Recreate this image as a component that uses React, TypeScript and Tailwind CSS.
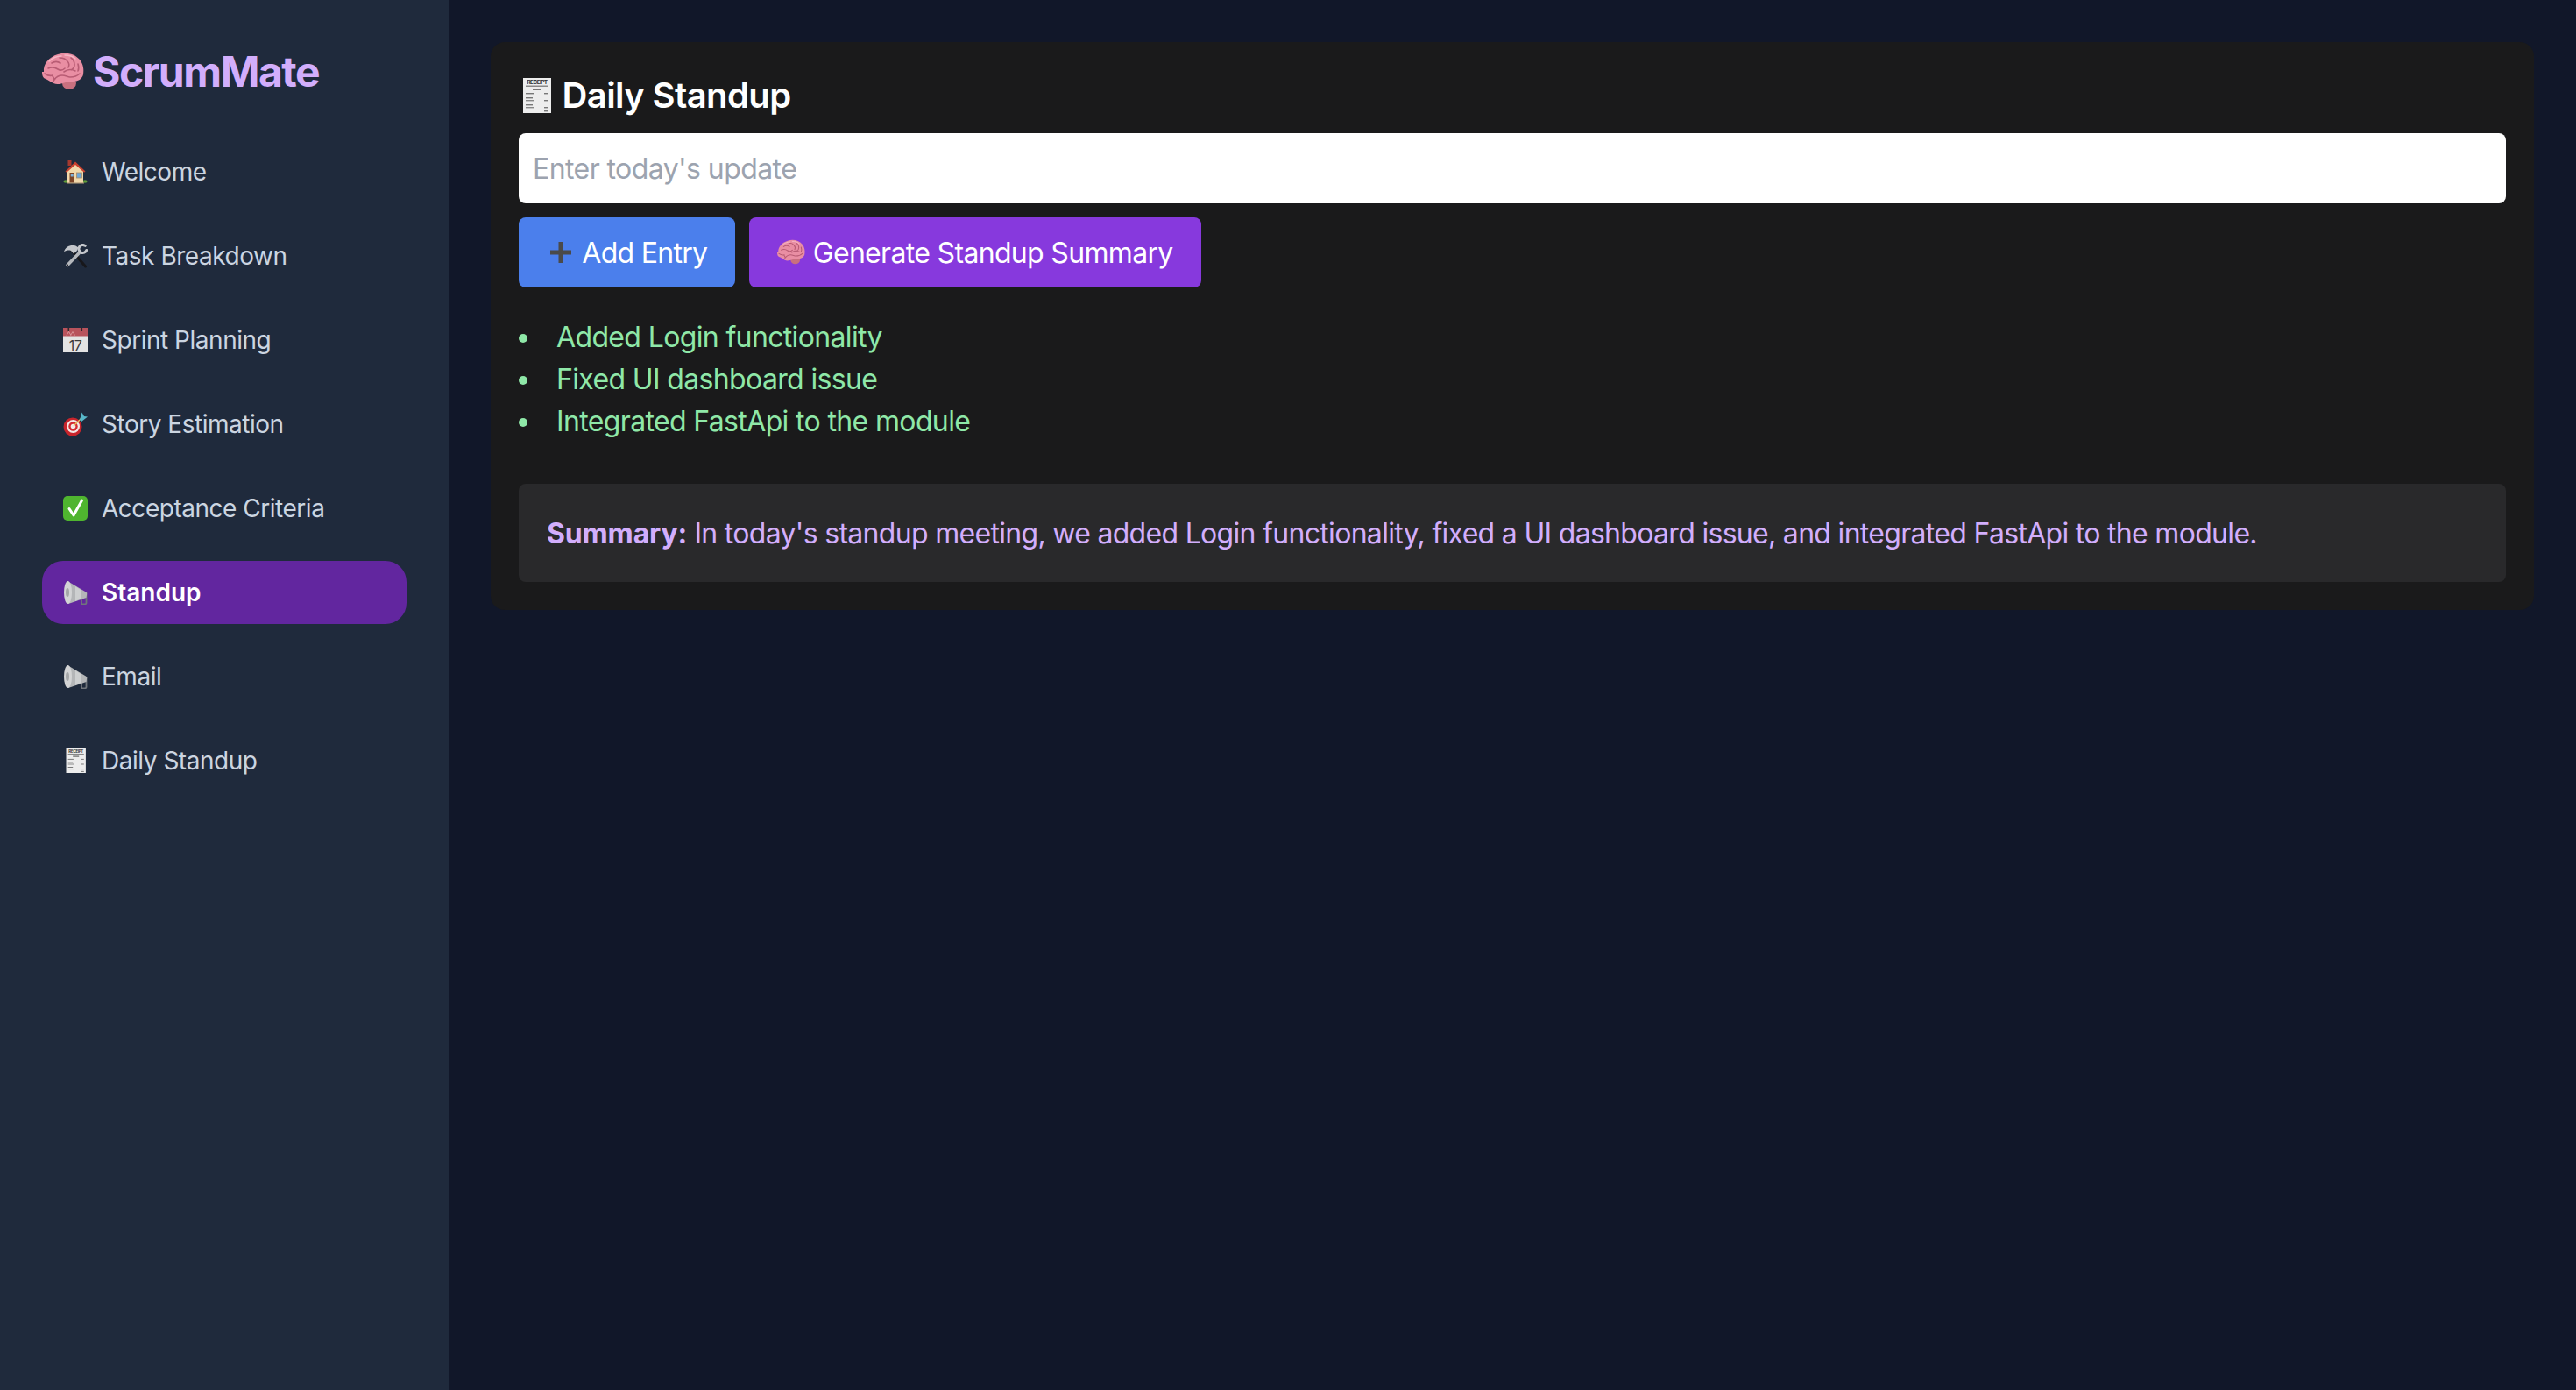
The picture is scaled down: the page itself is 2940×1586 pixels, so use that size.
import React from "react";

const cls = "inline-block size-[1em] shrink-0 align-[-0.14em]";

function Brain() {
  return (
    <svg viewBox="0 0 48 48" className={cls}>
      <ellipse cx="31" cy="37" rx="8" ry="7" fill="#c9707f" />
      <path d="M2 24C1 15 8 7 18 4c9-3 19-1 25 6 4 5 5 11 4 17-1 5-6 8-12 8-3 0-5 0-8 1-6 2-10 3-14 1-4-2-6-4-9-5-3-1-4-4-4-8Z" fill="#e98ea3" />
      <path d="M3 26c3 2 6 3 9 2M11 14c3-2 7-2 10 0M7 20c4-2 8-1 11 1 3 2 6 1 8-1M20 8c3 0 7 1 9 4 2 2 2 5 1 7M33 8c3 2 4 5 4 8s-2 5-4 6M14 33c2-3 5-5 9-5 4 0 6 2 9 2 4 0 8-1 11-4M25 24c4-3 9-3 13-1M12 29c2 2 2 4 1 6M41 15c1 3 1 6 0 8" fill="none" stroke="#b85c74" strokeWidth="1.6" strokeLinecap="round" />
      <path d="M8 12c4-4 9-6 14-6M26 5c5 0 9 1 12 4" fill="none" stroke="#f6b8c6" strokeWidth="1.4" strokeLinecap="round" />
    </svg>
  );
}

function House() {
  return (
    <svg viewBox="0 0 28 28" className={cls}>
      <rect x="5.5" y="1" width="4" height="6" fill="#a5392f" />
      <ellipse cx="3" cy="25" rx="2.6" ry="1.8" fill="#5f9a3a" />
      <ellipse cx="25" cy="25" rx="2.6" ry="1.8" fill="#5f9a3a" />
      <path d="M5 12 14 5l9 7v15H5Z" fill="#f1d8ab" />
      <path d="M2.5 13.5 14 2.5l11.5 11-1.5 1.2L14 6 4 14.7Z" fill="#c8412f" />
      <rect x="7.5" y="15" width="5.5" height="12" fill="#7d4426" />
      <rect x="8.7" y="16.5" width="3" height="3" fill="#7fb2dc" />
      <rect x="15.5" y="15" width="6" height="6" fill="#6fa7d8" stroke="#a98a68" strokeWidth="0.8" />
      <rect x="4" y="26.3" width="20" height="1.2" fill="#b9a27e" />
    </svg>
  );
}

function Tools() {
  return (
    <svg viewBox="0 0 28 28" className={cls}>
      <path d="M10 8 25.500 26" stroke="#17171b" strokeWidth="3" strokeLinecap="round" />
      <path d="M1 9.500C2.500 3.500 8 1 14.500 2.500l3 2-2 4-3.500 3-3-3.500C6.500 7 3.500 7.500 1 9.500Z" fill="#c4c7cc" />
      <path d="M19.500 9.500 5 24.500" stroke="#b4b7bc" strokeWidth="3.600" strokeLinecap="round" />
      <path d="M25.200 2.400A4.500 4.500 0 1 0 26.700 7.500" fill="none" stroke="#c4c7cc" strokeWidth="3" strokeLinecap="round" />
      <circle cx="5" cy="24.500" r="1.100" fill="#24242a" />
    </svg>
  );
}

function Calendar() {
  return (
    <svg viewBox="0 0 28 28" className={cls}>
      <rect x="0" y="0" width="28" height="28" fill="#e3e3e3" />
      <rect x="0" y="0" width="28" height="9.500" fill="#b8535c" />
      <rect x="5.500" y="0" width="1.600" height="4" fill="#33292b" />
      <rect x="20.500" y="0" width="1.600" height="4" fill="#33292b" />
      <path d="M4 8.500 6.500 4.500 9 8.500M8.500 8.500 11 4.500l2.500 4" fill="none" stroke="#dc9da2" strokeWidth="0.9" />
      <text x="14" y="25.500" textAnchor="middle" fontSize="16" fontFamily="Inter, sans-serif" fill="#3a3a3c">17</text>
    </svg>
  );
}

function Target() {
  return (
    <svg viewBox="0 0 28 28" className={cls}>
      <circle cx="11" cy="17" r="10.500" fill="#c8252c" />
      <circle cx="11.500" cy="16.500" r="7.500" fill="#f4e9e6" />
      <circle cx="11.500" cy="16.500" r="5.200" fill="#d42b31" />
      <circle cx="11.500" cy="16.500" r="2.800" fill="#f4e9e6" />
      <path d="M12 16 21 7" stroke="#e6c35c" strokeWidth="1.300" />
      <path d="M19 9 21.500 0.500 24 5l4 .5-7 5.500Z" fill="#57b7c9" />
    </svg>
  );
}

function Check() {
  return (
    <svg viewBox="0 0 28 28" className={cls}>
      <rect x="0" y="0" width="28" height="28" rx="5" fill="#4fb52f" />
      <path d="M7 14.500 12 22 21.500 5" fill="none" stroke="#fff" strokeWidth="3" strokeLinecap="round" strokeLinejoin="round" />
    </svg>
  );
}

function Megaphone() {
  return (
    <svg viewBox="0 0 28 28" className={cls}>
      <path d="M21 15h5.500v11c0 1-1 1.500-3 1.500h-1c-1 0-1.500-.5-1.500-1.500Z" fill="none" stroke="#70757c" strokeWidth="1.800" />
      <path d="M5 1 26 13.500c1 .6 1.500 1.800 1 3.500l-.5 3L6 27Z" fill="#b4b6b8" />
      <path d="M14 7 20 11v10l-6 3Z" fill="#cdcfd0" />
      <ellipse cx="5.500" cy="14" rx="4.500" ry="13" fill="#d3d4d5" />
      <ellipse cx="5" cy="14" rx="2" ry="5" fill="#a4a6a8" />
    </svg>
  );
}

function Receipt() {
  return (
    <svg viewBox="0 0 40 40" className={cls}>
      <rect x="5" y="0" width="32" height="40" fill="#ededed" />
      <text x="21" y="6.500" textAnchor="middle" fontSize="6.500" fontWeight="700" fontFamily="Inter, sans-serif" fill="#333">RECEIPT</text>
      <rect x="8" y="8.500" width="26" height="1.500" fill="#888" />
      <rect x="16" y="12" width="10" height="2" fill="#777" />
      <rect x="8" y="17" width="9" height="1.400" fill="#777" />
      <rect x="29" y="17" width="5" height="1.400" fill="#777" />
      <rect x="8" y="22" width="8" height="1.400" fill="#777" />
      <rect x="8" y="25" width="10" height="1.400" fill="#888" />
      <rect x="29" y="25" width="5" height="1.400" fill="#777" />
      <rect x="8" y="30" width="8" height="1.400" fill="#777" />
      <rect x="8" y="33" width="10" height="1.400" fill="#888" />
      <rect x="29" y="33" width="5" height="1.400" fill="#777" />
      <rect x="29" y="37" width="5" height="1.400" fill="#777" />
    </svg>
  );
}

function Plus() {
  return (
    <svg viewBox="0 0 32 32" className={cls}>
      <path d="M13.500 4h5v9.500H28v5h-9.500V28h-5v-9.500H4v-5h9.500Z" fill="#4a4a4a" />
    </svg>
  );
}

const nav: { icon: React.ReactNode; label: string; active?: boolean }[] = [
  { icon: <House />, label: "Welcome" },
  { icon: <Tools />, label: "Task Breakdown" },
  { icon: <Calendar />, label: "Sprint Planning" },
  { icon: <Target />, label: "Story Estimation" },
  { icon: <Check />, label: "Acceptance Criteria" },
  { icon: <Megaphone />, label: "Standup", active: true },
  { icon: <Megaphone />, label: "Email" },
  { icon: <Receipt />, label: "Daily Standup" },
];

const entries = ["Added Login functionality", "Fixed UI dashboard issue", "Integrated FastApi to the module"];

export default function App() {
  return (
    <div className="flex h-screen w-full bg-[#111729] font-['Inter',sans-serif]">
      <aside className="flex w-[512px] shrink-0 flex-col bg-[#1f2a3c] p-12">
        <h1 className="mb-[46px] pt-[2px] text-[48px] leading-[64px] font-bold tracking-[-0.03em] whitespace-nowrap text-[#d2aefc]">
          <Brain /> ScrumMate
        </h1>
        <nav className="flex flex-col gap-6">
          {nav.map((n) => (
            <a
              key={n.label}
              className={
                n.active
                  ? "flex items-center gap-4 rounded-3xl bg-[#62269f] px-6 py-4 text-[28px] leading-10 font-semibold text-white"
                  : "flex items-center gap-4 rounded-3xl px-6 py-4 text-[28px] leading-10 tracking-[-0.017em] text-[#cbd5e1]"
              }
            >
              {n.icon}
              <span>{n.label}</span>
            </a>
          ))}
        </nav>
      </aside>
      <main className="flex-1 p-12">
        <section className="rounded-2xl bg-[#1a1a1b] p-8">
          <h2 className="mb-4 pt-px text-[40px] leading-[55px] font-semibold tracking-[-0.015em] text-white">
            <Receipt /> Daily Standup
          </h2>
          <input
            placeholder="Enter today's update"
            className="mb-4 block h-20 w-full rounded-lg bg-white px-4 pt-px text-[32px] leading-[48px] tracking-[-0.018em] text-black outline-none placeholder:text-[#9ca3af]"
          />
          <div className="flex gap-4">
            <button className="rounded-lg bg-[#4b7fec] px-8 pt-[17px] pb-[15px] text-[32px] leading-[48px] tracking-[-0.022em] whitespace-nowrap text-white">
              <Plus /> Add Entry
            </button>
            <button className="rounded-lg bg-[#8739dd] px-8 pt-[17px] pb-[15px] text-[32px] leading-[48px] tracking-[-0.021em] whitespace-nowrap text-white">
              <Brain /> Generate Standup Summary
            </button>
          </div>
          <ul className="mt-[33px] mb-[47px] list-inside list-disc text-[32px] leading-[48px] tracking-[-0.02em] text-[#8fe8a8]">
            {entries.map((e) => (
              <li key={e}>{e}</li>
            ))}
          </ul>
          <div className="rounded-lg bg-[#29292b] px-8 pt-[33px] pb-[31px] text-[32px] leading-[48px] tracking-[-0.0216em] text-[#d2aefc]">
            <strong className="font-bold tracking-[-0.005em]">Summary:</strong> In today's standup meeting, we added Login functionality, fixed a UI dashboard issue, and integrated FastApi to the module.
          </div>
        </section>
      </main>
    </div>
  );
}
